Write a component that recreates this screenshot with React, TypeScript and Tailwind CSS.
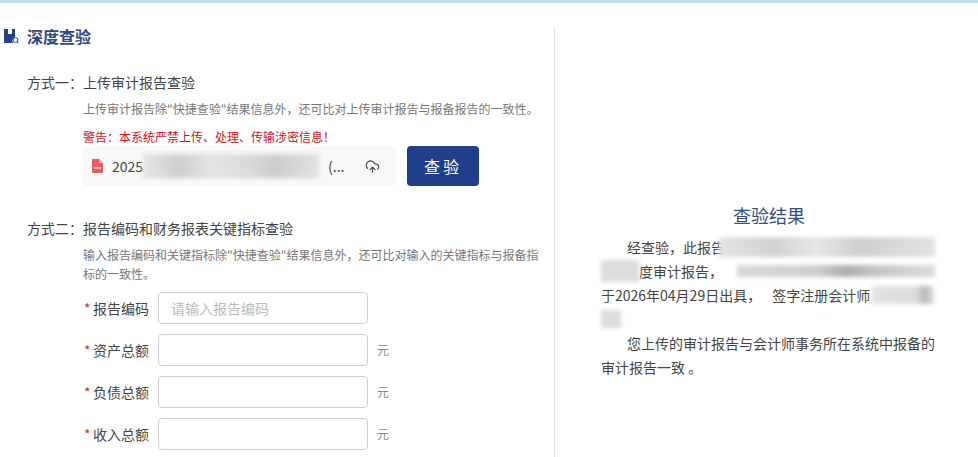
import { CloudUpload } from "lucide-react";

const fontStack = "font-['Noto_Sans_CJK_SC','Liberation_Sans',sans-serif]";

interface FieldProps {
  label: string;
  placeholder?: string;
  unit?: boolean;
}

function Field(props: FieldProps) {
  return (
    <div className="flex items-center h-8">
      <div className="w-[75px] shrink-0 pl-[1px] pr-[9px] flex justify-between text-sm text-[#444]">
        <span className="text-[#c0392b]">*</span>
        <span>{props.label}</span>
      </div>
      <div className="w-[210px] h-8 shrink-0 border border-[#cfcfcf] rounded-[4px] px-3 flex items-center text-sm text-[#bbb]">
        {props.placeholder}
      </div>
      {props.unit ? <span className="ml-[9px] text-xs text-[#888]">元</span> : null}
    </div>
  );
}

// blurred-out part of the text
function Smudge({ className }: { className: string }) {
  return <div className={`shrink-0 blur-[2px] ${className}`}></div>;
}

export default function App() {
  return (
    <div className={`${fontStack} w-[978px] h-[457px] overflow-hidden bg-white`}>
      <div className="h-[3px] bg-[#c5deee]"></div>
      <div className="flex pt-6 h-[454px]">
        {/* left side */}
        <div className="w-[555px] shrink-0 border-r border-[#e3e3e3]">
          <div className="flex items-center pl-1 h-[18px]">
            <svg width="15" height="16" viewBox="0 0 15 16" className="mr-2">
              <path d="M0 1h4v5h4V1h3v8a4 4 0 0 0-2 6H0z" fill="#24427f" />
              <circle cx="11.5" cy="12" r="2.4" fill="none" stroke="#24427f" strokeWidth="1" />
              <path d="M13.2 13.8l1.5 1.5" stroke="#24427f" strokeWidth="1" />
            </svg>
            <h1 className="text-base font-bold text-[#2f4a80]">深度查验</h1>
          </div>

          <div className="pl-[27px] mt-[27px]">
            <div className="text-sm text-[#444] leading-5">方式一：上传审计报告查验</div>
            <div className="pl-[56px] mt-[8px] text-xs leading-[18px] text-[#777]">
              上传审计报告除"快捷查验"结果信息外，还可比对上传审计报告与报备报告的一致性。
            </div>
            <div className="pl-[56px] mt-[10px] text-xs leading-[18px] text-[#d0121b]">
              警告：本系统严禁上传、处理、传输涉密信息！
            </div>
            <div className="flex items-center gap-[11px] pl-[56px]">
              <div className="w-[313px] h-10 bg-[#f8f8f8] rounded-[4px] flex items-center pl-[9px] pr-[16px] text-sm text-[#444]">
                <svg width="11" height="14" viewBox="0 0 11 14" className="mr-[9px]">
                  <path d="M0 1a1 1 0 0 1 1-1h6l4 4v9a1 1 0 0 1-1 1H1a1 1 0 0 1-1-1z" fill="#ee5a5f" />
                  <path d="M7 0l4 4H8a1 1 0 0 1-1-1z" fill="#f7a9ac" />
                  <rect x="2" y="8" width="7" height="2" fill="#fff" opacity="0.6" />
                </svg>
                <span>2025</span>
                <Smudge className="w-[176px] h-6 bg-[linear-gradient(90deg,#e6e6e6,#cfcfcf_20%,#e4e4e4_40%,#dadada_60%,#cdcdcd_75%,#e2e2e2)]" />
                <span className="ml-[9px]">(...</span>
                <CloudUpload size={15} strokeWidth={1.8} className="ml-auto" />
              </div>
              <button className="w-[72px] h-10 rounded-[4px] bg-[#1f3f8b] text-white text-base tracking-[3px]">
                查验
              </button>
            </div>

            <div className="text-sm text-[#444] leading-5 mt-[32px]">方式二：报告编码和财务报表关键指标查验</div>
            <div className="pl-[56px] pr-[14px] mt-[7px] text-xs leading-[19px] text-[#777]">
              输入报告编码和关键指标除"快捷查验"结果信息外，还可比对输入的关键指标与报备指标的一致性。
            </div>
            <div className="pl-[56px] mt-[9px] flex flex-col gap-[10px]">
              <Field label="报告编码" placeholder="请输入报告编码" />
              <Field label="资产总额" unit />
              <Field label="负债总额" unit />
              <Field label="收入总额" unit />
            </div>
          </div>
        </div>

        {/* right side */}
        <div className="flex-1 pl-[46px] pr-[41px] pt-[176px]">
          <h2 className="text-center text-lg leading-6 text-[#34507f]">查验结果</h2>
          <div className="mt-[8px] text-sm leading-6 text-[#444]">
            <div className="flex items-center h-6 pl-[26px]">
              <span>经查验，此报告</span>
              <Smudge className="-ml-[6px] w-[216px] h-5 bg-[linear-gradient(90deg,#e4e4e4,#d2d2d2_25%,#e6e6e6_45%,#cfcfcf_65%,#e2e2e2)]" />
            </div>
            <div className="flex items-center h-6">
              <Smudge className="w-[38px] h-[22px] bg-[#dcdcdc]" />
              <span>度审计报告，</span>
              <Smudge className="ml-[14px] w-[198px] h-3 bg-[linear-gradient(90deg,#d8d8d8,#cfcfcf_40%,#aeaeae_55%,#c4c4c4_70%,#dcdcdc)]" />
            </div>
            <div className="flex items-center h-6">
              <span>于2026年04月29日出具，</span>
              <span className="ml-[11px]">签字注册会计师</span>
              <Smudge className="ml-[2px] w-[62px] h-[18px] bg-[linear-gradient(90deg,#e2e2e2,#dcdcdc_70%,#b8b8b8_85%,#e0e0e0)]" />
            </div>
            <div className="flex items-center h-6">
              <Smudge className="w-5 h-[18px] bg-[#dcdcdc]" />
            </div>
            <p className="indent-[26px] m-0">您上传的审计报告与会计师事务所在系统中报备的审计报告一致 。</p>
          </div>
        </div>
      </div>
    </div>
  );
}
